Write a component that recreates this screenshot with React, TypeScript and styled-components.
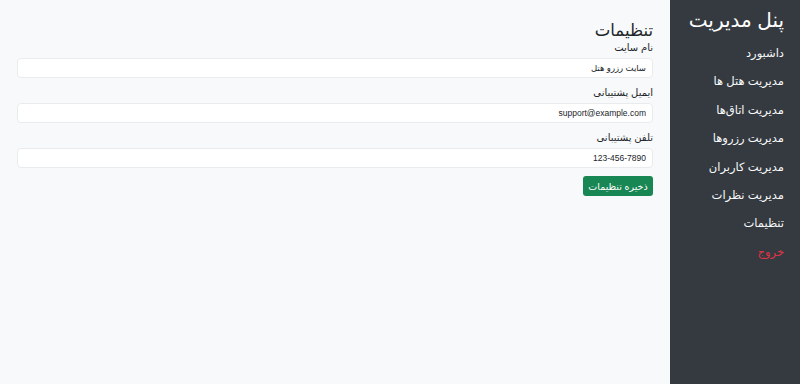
import React, { FC } from 'react'
import styled, { createGlobalStyle } from 'styled-components';

const GlobalStyle = createGlobalStyle`
    html, body {
        margin: 0;
        padding: 0;
        background: #f8f9fa;
    }
    body {
        font-family: "Liberation Sans", "DejaVu Sans", sans-serif;
    }
`;

const Layout = styled.div`
    display: flex;
    flex-direction: row;
    direction: rtl;
    width: 800px;
    height: 384px;
    overflow: hidden;
`;

const Sidebar = styled.aside`
    width: 130px;
    flex-shrink: 0;
    background: #343a40;
    color: #fff;
    padding: 7px 16px 0 0;
    box-sizing: border-box;
`;

const SidebarTitle = styled.h1`
    margin: 0 0 6px;
    font-size: 20px;
    font-weight: 400;
    line-height: 26px;
    white-space: nowrap;
`;

const NavList = styled.ul`
    list-style: none;
    margin: 0;
    padding: 0;
    display: flex;
    flex-direction: column;
`;

const NavItem = styled.li<{ $danger?: boolean }>`
    font-size: 11.5px;
    line-height: 28.4px;
    color: ${p => p.$danger ? '#dc3545' : '#f8f9fa'};
    cursor: pointer;
`;

const Main = styled.main`
    flex: 1;
    padding: 19px 17px 0 17px;
    box-sizing: border-box;
`;

const PageTitle = styled.h2`
    margin: 0;
    font-size: 16.5px;
    font-weight: 400;
    line-height: 22px;
    color: #212529;
`;

const Form = styled.form`
    display: flex;
    flex-direction: column;
    align-items: stretch;
`;

const Field = styled.div`
    display: flex;
    flex-direction: column;
    margin-bottom: 8px;
`;

const Label = styled.label`
    font-size: 10px;
    line-height: 14px;
    color: #212529;
    margin-bottom: 3px;
`;

const Input = styled.input`
    height: 20px;
    box-sizing: border-box;
    border: 1px solid #e9ecef;
    border-radius: 4px;
    background: #fff;
    padding: 0 6px;
    font-family: inherit;
    font-size: 8.5px;
    color: #212529;
    direction: rtl;
    outline: none;
`;

const SaveButton = styled.button`
    align-self: flex-start;
    height: 20px;
    width: 70px;
    border: none;
    border-radius: 3px;
    background: #198754;
    color: #fff;
    font-family: inherit;
    font-size: 9.5px;
    padding: 0;
    cursor: pointer;
`;

const navItems = [
    'داشبورد',
    'مدیریت هتل ها',
    'مدیریت اتاق‌ها',
    'مدیریت رزروها',
    'مدیریت کاربران',
    'مدیریت نظرات',
    'تنظیمات',
];

const App: FC = () => {
    return (
        <>
            <GlobalStyle />
            <Layout>
                <Sidebar>
                    <SidebarTitle>پنل مدیریت</SidebarTitle>
                    <NavList>
                        {navItems.map(item => <NavItem key={item}>{item}</NavItem>)}
                        <NavItem $danger>خروج</NavItem>
                    </NavList>
                </Sidebar>
                <Main>
                    <PageTitle>تنظیمات</PageTitle>
                    <Form onSubmit={e => e.preventDefault()}>
                        <Field>
                            <Label>نام سایت</Label>
                            <Input defaultValue="سایت رزرو هتل" />
                        </Field>
                        <Field>
                            <Label>ایمیل پشتیبانی</Label>
                            <Input defaultValue="support@example.com" />
                        </Field>
                        <Field>
                            <Label>تلفن پشتیبانی</Label>
                            <Input defaultValue="123-456-7890" />
                        </Field>
                        <SaveButton type="submit">ذخیره تنظیمات</SaveButton>
                    </Form>
                </Main>
            </Layout>
        </>
    )
}

export default App
